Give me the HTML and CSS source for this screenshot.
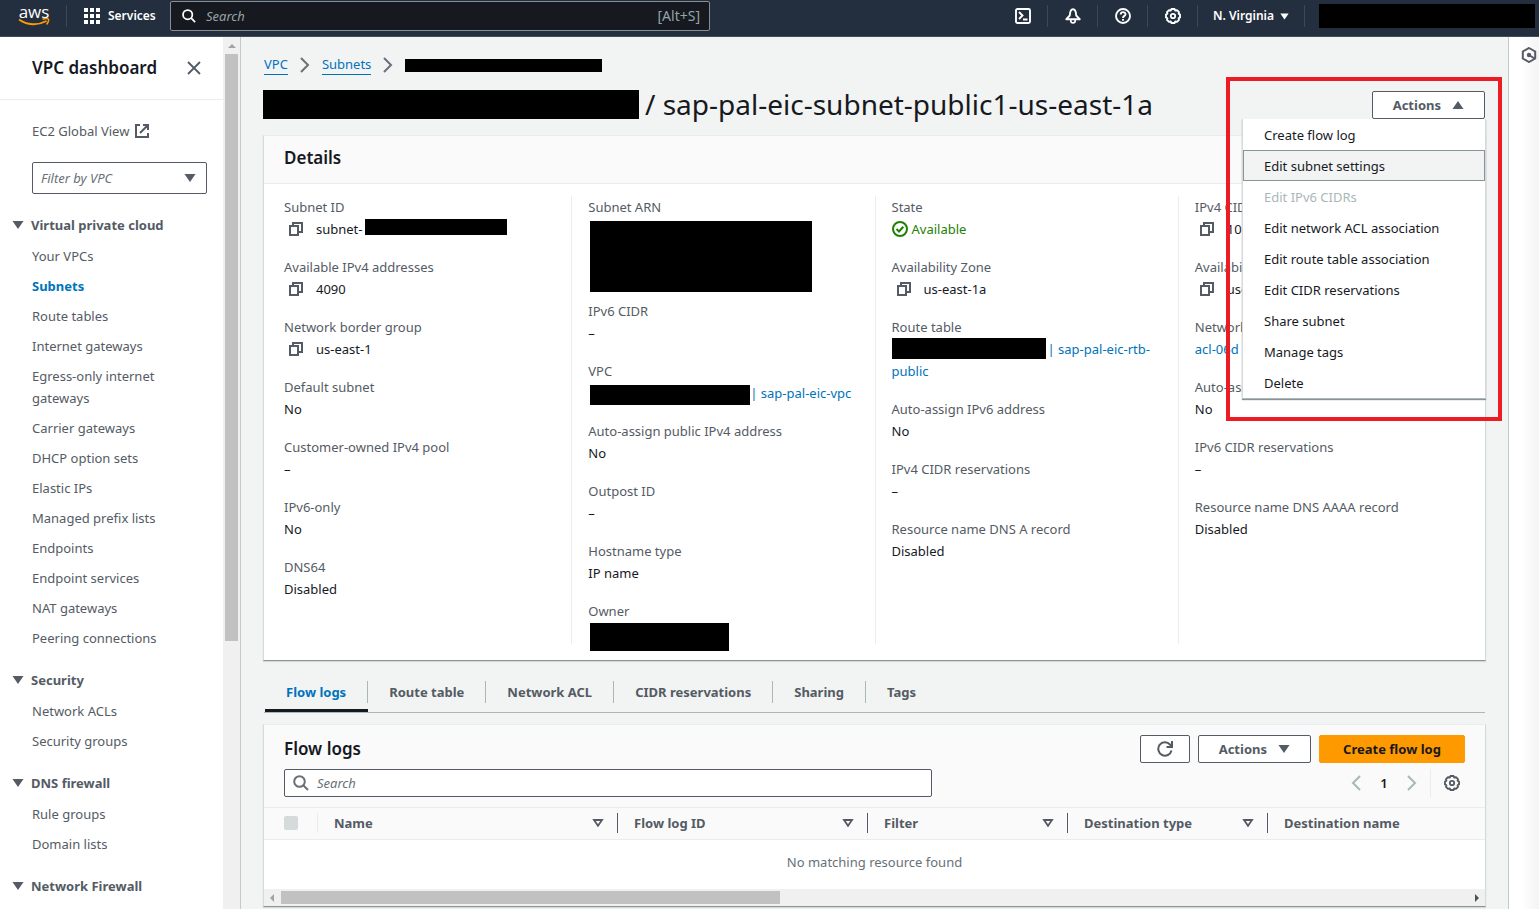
FILE: index.html
```html
<!DOCTYPE html>
<html lang="en">
<head>
<meta charset="utf-8">
<title>VPC dashboard</title>
<link rel="stylesheet" href="styles.css">
</head>
<body>
<svg class="defs" aria-hidden="true">
  <symbol id="copy" viewBox="0 0 16 16"><path d="M2 5h8v9H2z M5 5V2h9v9h-4" fill="none" stroke="currentColor" stroke-width="2"/></symbol>
  <symbol id="search" viewBox="0 0 16 16"><circle cx="6.5" cy="6.5" r="5.3" fill="none" stroke="currentColor" stroke-width="2"/><path d="M10.5 10.5 15 15" stroke="currentColor" stroke-width="2"/></symbol>
  <symbol id="down" viewBox="0 0 12 8"><path d="M.5 0h11L6 8z" fill="currentColor"/></symbol>
  <symbol id="up" viewBox="0 0 12 8"><path d="M.5 8h11L6 0z" fill="currentColor"/></symbol>
  <symbol id="sort" viewBox="0 0 12 8"><path d="M2 1h8L6 6.8z" fill="none" stroke="currentColor" stroke-width="1.8"/></symbol>
  <symbol id="right" viewBox="0 0 10 16"><path d="M1 1l7 7-7 7" fill="none" stroke="currentColor" stroke-width="2"/></symbol>
  <symbol id="left" viewBox="0 0 10 16"><path d="M9 1L2 8l7 7" fill="none" stroke="currentColor" stroke-width="2"/></symbol>
  <symbol id="gear" viewBox="0 0 16 16"><path d="M6.500 1h3l.8 1.500 1.700-.3 2 2-.4 1.600L15 6.600v2.800l-1.400.8.400 1.700-2 2-1.700-.4L9.500 15h-3l-.8-1.500-1.700.4-2-2 .4-1.700L1 9.400V6.600l1.400-.8L2 4.200l2-2 1.700.3z" fill="none" stroke="currentColor" stroke-width="1.900" stroke-linejoin="round"/><circle cx="8" cy="8" r="2.200" fill="none" stroke="currentColor" stroke-width="1.800"/></symbol>
</svg>

<header class="topbar">
  <a class="logo" href="#" aria-label="aws home">
    <span class="logo-text">aws</span>
    <svg class="logo-smile" viewBox="0 0 32 9"><path d="M1 1.500C9 7.200 19.500 7.800 28.500 3" fill="none" stroke="#f90" stroke-width="1.900"/><path d="M24.500 1.300c2.300-.9 5-.9 5.800-.3s0 3.600-1.800 5.600" fill="none" stroke="#f90" stroke-width="1.500"/></svg>
  </a>
  <button class="services" type="button">
    <svg class="i16" viewBox="0 0 16 16" fill="#fff"><path d="M0 0h4v4H0zM6 0h4v4H6zM12 0h4v4h-4zM0 6h4v4H0zM6 6h4v4H6zM12 6h4v4h-4zM0 12h4v4H0zM6 12h4v4H6zM12 12h4v4h-4z"/></svg>
    <span>Services</span>
  </button>
  <label class="global-search">
    <svg class="i14"><use href="#search"/></svg>
    <input type="search" placeholder="Search" aria-label="Search">
    <span class="hint">[Alt+S]</span>
  </label>
  <nav class="tools">
    <button class="tool" type="button" aria-label="CloudShell"><svg class="i16" viewBox="0 0 16 16" fill="none" stroke="#fff" stroke-width="1.900"><rect x="1" y="1" width="14" height="14" rx="1.500"/><path d="M4 4l3.500 3.500L4 11M8 11.500h4.500"/></svg></button>
    <button class="tool" type="button" aria-label="Notifications"><svg class="i16" viewBox="0 0 16 16" fill="none" stroke="#fff" stroke-width="1.900"><path d="M1.300 11.200L4.800 7.500C5 3.500 6.300 1.300 8 1.300S11 3.500 11.200 7.500l3.500 3.700z" stroke-linejoin="round"/><path d="M5.800 11.500v1c0 3.200 4.400 3.200 4.400 0v-1" stroke-width="1.700"/></svg></button>
    <button class="tool" type="button" aria-label="Help"><svg class="i16" viewBox="0 0 16 16" fill="none" stroke="#fff" stroke-width="1.900"><circle cx="8" cy="8" r="7"/><path d="M5.700 6.500C5.700 3.300 10.500 3.500 10.500 6.200 10.500 8 8 7.800 8 10M8 11v1.700"/></svg></button>
    <button class="tool" type="button" aria-label="Settings"><svg class="i16"><use href="#gear"/></svg></button>
    <button class="region" type="button">N. Virginia <svg class="arrow-s"><use href="#down"/></svg></button>
    <span class="redact account"></span>
  </nav>
</header>

<div class="layout">
  <aside class="sidebar">
    <div class="side-content">
      <div class="side-head">
        <h2>VPC dashboard</h2>
        <button class="plain" type="button" aria-label="Close navigation"><svg class="i14" viewBox="0 0 14 14"><path d="M1 1l12 12M13 1L1 13" stroke="currentColor" stroke-width="1.800"/></svg></button>
      </div>
      <nav class="side-nav">
        <a class="global" href="#">EC2 Global View <svg class="i14" viewBox="0 0 14 14" fill="none" stroke="currentColor" stroke-width="2"><path d="M5 1H1v12h12V9M8 1h5v5M13 1L5 9"/></svg></a>
        <div class="filter">
          <select aria-label="Filter by VPC"><option>Filter by VPC</option></select>
          <svg class="arrow"><use href="#down"/></svg>
        </div>
        <section>
          <h3><svg class="arrow"><use href="#down"/></svg>Virtual private cloud</h3>
          <ul>
            <li><a href="#">Your VPCs</a></li>
            <li><a class="current" href="#">Subnets</a></li>
            <li><a href="#">Route tables</a></li>
            <li><a href="#">Internet gateways</a></li>
            <li><a href="#">Egress-only internet gateways</a></li>
            <li><a href="#">Carrier gateways</a></li>
            <li><a href="#">DHCP option sets</a></li>
            <li><a href="#">Elastic IPs</a></li>
            <li><a href="#">Managed prefix lists</a></li>
            <li><a href="#">Endpoints</a></li>
            <li><a href="#">Endpoint services</a></li>
            <li><a href="#">NAT gateways</a></li>
            <li><a href="#">Peering connections</a></li>
          </ul>
        </section>
        <section>
          <h3><svg class="arrow"><use href="#down"/></svg>Security</h3>
          <ul>
            <li><a href="#">Network ACLs</a></li>
            <li><a href="#">Security groups</a></li>
          </ul>
        </section>
        <section>
          <h3><svg class="arrow"><use href="#down"/></svg>DNS firewall</h3>
          <ul>
            <li><a href="#">Rule groups</a></li>
            <li><a href="#">Domain lists</a></li>
          </ul>
        </section>
        <section>
          <h3><svg class="arrow"><use href="#down"/></svg>Network Firewall</h3>
        </section>
      </nav>
    </div>
    <div class="vscroll"><svg class="scroll-arrow" viewBox="0 0 8 4"><path d="M0 4h8L4 0z" fill="#a3a3a3"/></svg><div class="vthumb"></div></div>
  </aside>

  <main class="main">
    <nav class="crumbs" aria-label="Breadcrumb">
      <a href="#">VPC</a><svg class="chev"><use href="#right"/></svg>
      <a href="#">Subnets</a><svg class="chev"><use href="#right"/></svg>
      <span class="redact crumb-id"></span>
    </nav>
    <div class="title-row">
      <h1><span class="redact title-id"></span>/ sap-pal-eic-subnet-public1-us-east-1a</h1>
      <div class="actions">
        <button class="btn" type="button" aria-expanded="true">Actions <svg class="arrow"><use href="#up"/></svg></button>
        <div class="menu" role="menu">
          <button type="button" role="menuitem">Create flow log</button>
          <button class="active" type="button" role="menuitem">Edit subnet settings</button>
          <button type="button" role="menuitem" disabled>Edit IPv6 CIDRs</button>
          <button type="button" role="menuitem">Edit network ACL association</button>
          <button type="button" role="menuitem">Edit route table association</button>
          <button type="button" role="menuitem">Edit CIDR reservations</button>
          <button type="button" role="menuitem">Share subnet</button>
          <button type="button" role="menuitem">Manage tags</button>
          <button type="button" role="menuitem">Delete</button>
        </div>
        <div class="marker"></div>
      </div>
    </div>

    <section class="card">
      <div class="card-head"><h2>Details</h2></div>
      <div class="details">
        <dl>
          <div><dt>Subnet ID</dt><dd><svg class="copy"><use href="#copy"/></svg>subnet-<span class="redact subnet-id"></span></dd></div>
          <div><dt>Available IPv4 addresses</dt><dd><svg class="copy"><use href="#copy"/></svg>4090</dd></div>
          <div><dt>Network border group</dt><dd><svg class="copy"><use href="#copy"/></svg>us-east-1</dd></div>
          <div><dt>Default subnet</dt><dd>No</dd></div>
          <div><dt>Customer-owned IPv4 pool</dt><dd>–</dd></div>
          <div><dt>IPv6-only</dt><dd>No</dd></div>
          <div><dt>DNS64</dt><dd>Disabled</dd></div>
        </dl>
        <dl>
          <div><dt>Subnet ARN</dt><dd class="arn"><span class="redact"></span></dd></div>
          <div><dt>IPv6 CIDR</dt><dd>–</dd></div>
          <div><dt>VPC</dt><dd><span class="redact vpc-id"></span><a href="#">| sap-pal-eic-vpc</a></dd></div>
          <div><dt>Auto-assign public IPv4 address</dt><dd>No</dd></div>
          <div><dt>Outpost ID</dt><dd>–</dd></div>
          <div><dt>Hostname type</dt><dd>IP name</dd></div>
          <div><dt>Owner</dt><dd class="owner"><span class="redact"></span></dd></div>
        </dl>
        <dl>
          <div><dt>State</dt><dd class="ok"><svg class="i16" viewBox="0 0 16 16" fill="none" stroke="currentColor" stroke-width="2"><circle cx="8" cy="8" r="7"/><path d="M4.500 8l2.500 2.500 4.300-4.700"/></svg>Available</dd></div>
          <div><dt>Availability Zone</dt><dd><svg class="copy"><use href="#copy"/></svg>us-east-1a</dd></div>
          <div><dt>Route table</dt><dd class="wrap"><a href="#"><span class="redact rtb-id"></span>| sap-pal-eic-rtb-public</a></dd></div>
          <div><dt>Auto-assign IPv6 address</dt><dd>No</dd></div>
          <div><dt>IPv4 CIDR reservations</dt><dd>–</dd></div>
          <div><dt>Resource name DNS A record</dt><dd>Disabled</dd></div>
        </dl>
        <dl>
          <div><dt>IPv4 CIDR</dt><dd><svg class="copy"><use href="#copy"/></svg>10.</dd></div>
          <div><dt>Availabil</dt><dd><svg class="copy"><use href="#copy"/></svg>use</dd></div>
          <div><dt>Network</dt><dd><a href="#">acl-06d</a></dd></div>
          <div><dt>Auto-ass</dt><dd>No</dd></div>
          <div><dt>IPv6 CIDR reservations</dt><dd>–</dd></div>
          <div><dt>Resource name DNS AAAA record</dt><dd>Disabled</dd></div>
        </dl>
      </div>
    </section>

    <div class="tabs" role="tablist">
      <button class="tab selected" type="button" role="tab" aria-selected="true"><span>Flow logs</span></button>
      <button class="tab" type="button" role="tab"><span>Route table</span></button>
      <button class="tab" type="button" role="tab"><span>Network ACL</span></button>
      <button class="tab" type="button" role="tab"><span>CIDR reservations</span></button>
      <button class="tab" type="button" role="tab"><span>Sharing</span></button>
      <button class="tab" type="button" role="tab"><span>Tags</span></button>
    </div>

    <section class="card">
      <div class="logs-head">
        <div class="row">
          <h2>Flow logs</h2>
          <div class="buttons">
            <button class="btn refresh" type="button" aria-label="Refresh"><svg class="i16" viewBox="0 0 16 16" fill="none" stroke="currentColor" stroke-width="2"><path d="M14.500 9.500A6.700 6.700 0 1 1 13 3.500L15 5.500M15 0v6H9.500"/></svg></button>
            <button class="btn" type="button">Actions <svg class="arrow"><use href="#down"/></svg></button>
            <button class="btn primary" type="button">Create flow log</button>
          </div>
        </div>
        <div class="row">
          <label class="table-search"><svg class="i16"><use href="#search"/></svg><input type="search" placeholder="Search" aria-label="Search flow logs"></label>
          <div class="pager">
            <button class="plain muted" type="button" aria-label="Previous page"><svg class="chev"><use href="#left"/></svg></button>
            <span class="page">1</span>
            <button class="plain muted" type="button" aria-label="Next page"><svg class="chev"><use href="#right"/></svg></button>
            <button class="plain prefs" type="button" aria-label="Preferences"><svg class="i16"><use href="#gear"/></svg></button>
          </div>
        </div>
      </div>
      <table>
        <colgroup><col class="c-check"><col class="c-name"><col class="c-id"><col class="c-mid"><col class="c-mid"><col></colgroup>
        <thead>
          <tr>
            <th><div class="th check"><input type="checkbox" aria-label="Select all" disabled></div></th>
            <th><div class="th">Name<svg class="arrow"><use href="#sort"/></svg></div></th>
            <th><div class="th">Flow log ID<svg class="arrow"><use href="#sort"/></svg></div></th>
            <th><div class="th">Filter<svg class="arrow"><use href="#sort"/></svg></div></th>
            <th><div class="th">Destination type<svg class="arrow"><use href="#sort"/></svg></div></th>
            <th><div class="th last">Destination name</div></th>
          </tr>
        </thead>
        <tbody><tr><td colspan="6">No matching resource found</td></tr></tbody>
      </table>
      <div class="hscroll">
        <svg class="side-arrow" viewBox="0 0 4 8"><path d="M4 0v8L0 4z" fill="#a3a3a3"/></svg>
        <div class="htrack"><div class="hthumb"></div></div>
        <svg class="side-arrow" viewBox="0 0 4 8"><path d="M0 0v8l4-4z" fill="#505050"/></svg>
      </div>
    </section>
  </main>

  <aside class="rail">
    <button class="plain" type="button" aria-label="Open tools"><svg class="i16" viewBox="0 0 16 16" fill="none" stroke="currentColor" stroke-width="2"><path d="M8 1l6.200 3.500v7L8 15l-6.200-3.500v-7z"/><circle cx="8" cy="8" r="2.200" fill="currentColor" stroke="none"/><path d="M8 8l5.500 3.500"/></svg></button>
  </aside>
</div>
</body>
</html>
```
FILE: styles.css
```css
* { box-sizing: border-box; }
body {
  margin: 0;
  height: 100vh;
  display: flex;
  flex-direction: column;
  overflow: hidden;
  background: #f2f3f3;
  color: #16191f;
  font: 13px/22px "Noto Sans", "Open Sans", sans-serif;
}
h1, h2, h3, ul, dl, dd { margin: 0; padding: 0; }
ul { list-style: none; }
a { color: #0073bb; text-decoration: none; }
button, input, select { font: inherit; color: inherit; }
svg { flex: none; display: block; }
h2 { font-size: 17px; font-weight: 600; }
.defs { position: absolute; width: 0; height: 0; }
.i16 { width: 16px; height: 16px; }
.i14 { width: 14px; height: 14px; }
.arrow { width: 12px; height: 8px; }
.arrow-s { width: 9px; height: 7px; }
.chev { width: 10px; height: 16px; }
.redact { display: inline-block; background: #000; }
.plain { display: flex; padding: 0; border: 0; background: none; color: #545b64; }

/* Top bar */
.topbar {
  flex: none;
  height: 37px;
  display: flex;
  align-items: flex-start;
  padding-right: 4px;
  background: #232f3e;
  border-bottom: 1px solid #414d5c;
  color: #fff;
  font-size: 12px;
}
.logo { width: 67px; height: 22px; margin-top: 5px; padding-left: 18px; border-right: 1px solid #414750; color: #fff; }
.logo-text { display: block; width: 32px; text-align: center; font: 400 17px/13px "Open Sans", sans-serif; }
.logo-smile { width: 32px; height: 9px; }
.services { display: flex; align-items: center; gap: 8px; width: 103px; height: 32px; padding: 0 0 0 17px; border: 0; background: none; font-weight: 600; }
.global-search {
  flex: 0 1 540px;
  display: flex;
  align-items: center;
  height: 30px;
  margin-top: 1px;
  padding: 0 9px 0 11px;
  gap: 10px;
  background: #16191f;
  border: 1px solid #878f93;
  border-radius: 2px;
}
.global-search input, .table-search input { flex: 1; min-width: 0; padding: 0; border: 0; outline: 0; background: none; font-size: 13px; }
input::placeholder { font-style: italic; color: #687078; opacity: 1; }
.global-search input::placeholder { color: #95a5a6; }
.hint { color: #95a5a6; font-size: 14px; }
.tools { margin-left: auto; display: flex; align-items: center; margin-top: 4px; }
.tool, .region { display: flex; align-items: center; justify-content: center; height: 22px; padding: 0; background: none; border: 0; border-right: 1px solid #414750; }
.tool { width: 50px; }
.region { width: 107px; gap: 6px; font-size: 12px; font-weight: 600; }
.account { width: 216px; height: 24px; margin-left: 14px; }

/* Page frame */
.layout { flex: 1; min-height: 0; display: flex; }
.sidebar { flex: none; width: 241px; display: flex; background: #fff; border-right: 1px solid #c5cacb; }
.side-content { flex: 1; min-width: 0; overflow: hidden; color: #545b64; }
.side-head { display: flex; align-items: center; justify-content: space-between; height: 63px; padding: 0 22px 0 32px; border-bottom: 1px solid #eaeded; }
.side-head h2 { color: #16191f; }
.side-nav { padding: 20px 16px 20px 32px; }
.side-nav a { color: #545b64; }
.side-nav .current { color: #0073bb; font-weight: 700; }
.global { display: flex; align-items: center; gap: 6px; }
.filter { display: flex; align-items: center; margin: 20px 0; height: 32px; border: 1px solid #545b64; border-radius: 2px; }
.filter select { flex: 1; height: 30px; padding: 0 8px; border: 0; background: none; appearance: none; font-style: italic; color: #687078; }
.filter .arrow { margin-right: 10px; }
.side-nav section { margin-bottom: 20px; }
.side-nav h3 { display: flex; align-items: center; gap: 7px; margin: 0 0 9px -20px; font-size: 13px; font-weight: 700; }
.side-nav li + li { margin-top: 8px; }
.vscroll { flex: none; width: 17px; background: #f0f0f0; padding: 7px 2px 0; }
.scroll-arrow { width: 8px; height: 4px; margin: 0 auto 6px; }
.vthumb { height: 587px; background: #c1c1c1; }
.rail { flex: none; width: 31px; padding: 10px 0 0 12px; background: linear-gradient(90deg, #fff 40%, #f4f4f4); border-left: 1px solid #c5cacb; }
.main { flex: 1; min-width: 0; padding: 18px 23px 0; }

/* Title */
.crumbs { display: flex; align-items: center; gap: 12px; }
.crumbs a { line-height: 19px; border-bottom: 1px solid #0073bb; }
.crumbs .chev { color: #687078; }
.crumb-id { width: 197px; height: 13px; }
.title-row { display: flex; align-items: flex-start; justify-content: space-between; margin: 11px 0 12px; }
h1 { display: flex; align-items: center; gap: 6px; margin-left: -1px; font-size: 28px; line-height: 37px; font-weight: 400; white-space: nowrap; }
.title-id { width: 376px; height: 29px; }
.actions { position: relative; margin-top: 5px; }
.btn {
  display: flex;
  align-items: center;
  justify-content: center;
  gap: 11px;
  height: 28px;
  min-width: 113px;
  padding: 0 20px;
  background: #fff;
  border: 1px solid #545b64;
  border-radius: 2px;
  color: #545b64;
  font-weight: 700;
}
.btn.refresh { min-width: 50px; padding: 0; }
.btn.primary { min-width: 146px; background: #f90; border-color: #f90; color: #16191f; }
.menu {
  position: absolute;
  z-index: 2;
  top: 28px;
  right: -1px;
  width: 244px;
  background: #fff;
  border: 1px solid #d5dbdb;
  border-top: 0;
  border-bottom-color: #aab7b8;
  box-shadow: 0 1px 1px #879596;
}
.menu button { display: block; width: 100%; height: 31px; padding: 0 20px; border: 1px solid transparent; background: none; text-align: left; line-height: 22px; }
.menu .active { background: #f2f3f3; border-color: #879596; }
.menu button:disabled { color: #aab7b8; }
.marker { position: absolute; z-index: 3; top: -14px; right: -17px; width: 276px; height: 344px; border: 4px solid #ed1c24; pointer-events: none; }

/* Cards */
.card { margin: 0 -1px; background: #fff; border: 1px solid #d5dbdb; border-top-color: #eaeded; border-bottom-color: #879596; box-shadow: 0 1px 1px #d5dbdb; }
.card-head { height: 48px; padding: 11px 20px; background: #fafafa; border-bottom: 1px solid #eaeded; }
.details { display: grid; grid-template-columns: repeat(4, 1fr); padding: 12px 4px 16px; }
dl { display: flex; flex-direction: column; gap: 16px; padding: 0 16px; min-width: 0; }
dl + dl { border-left: 1px solid #eaeded; }
dt { color: #545b64; }
dt, dd { white-space: nowrap; }
dd { display: flex; align-items: center; height: 22px; }
dd.wrap { display: block; height: auto; white-space: normal; }
.copy { width: 16px; height: 16px; margin: 0 12px 0 4px; color: #545b64; }
.ok { gap: 4px; color: #1d8102; }
.subnet-id { width: 142px; height: 16px; margin: 0 0 4px 2px; }
dd.arn { height: 66px; padding: 3px 0 0 2px; align-items: flex-start; }
.arn .redact { flex: none; width: 222px; height: 71px; }
.vpc-id { width: 160px; height: 20px; margin: 4px 0 0 2px; }
dd.owner { padding: 1px 0 0 2px; align-items: flex-start; }
.owner .redact { flex: none; width: 139px; height: 28px; }
.rtb-id { width: 154px; height: 21px; margin-right: 2px; vertical-align: top; }

/* Tabs */
.tabs { display: flex; height: 41px; margin: 11px 0; padding-left: 1px; border-bottom: 1px solid #aab7b8; }
.tab { padding: 3px 0 0; border: 0; border-bottom: 3px solid transparent; background: none; color: #545b64; font-weight: 700; }
.tab span { display: block; padding: 0 21px; border-right: 1px solid #aab7b8; }
.tab:last-child span { border-right: 0; }
.selected { color: #0073bb; border-bottom-color: #16191f; }

/* Flow logs */
.logs-head { display: flex; flex-direction: column; gap: 6px; padding: 10px 20px; background: #fafafa; border-bottom: 1px solid #eaeded; }
.row { display: flex; align-items: center; justify-content: space-between; }
.buttons { display: flex; gap: 8px; }
.table-search { flex: 0 1 648px; display: flex; align-items: center; gap: 8px; height: 28px; padding: 0 8px; background: #fff; border: 1px solid #545b64; border-radius: 2px; }
.table-search svg { color: #687078; }
.pager { display: flex; align-items: center; }
.muted { color: #aab7b8; }
.page { width: 46px; text-align: center; font-weight: 600; }
.prefs { height: 28px; align-items: center; margin-left: 13px; padding: 0 5px 0 13px; border-left: 1px solid #eaeded; }
table { width: 100%; table-layout: fixed; border-collapse: collapse; }
.c-check { width: 54px; }
.c-name { width: 300px; }
.c-id { width: 250px; }
.c-mid { width: 200px; }
th { height: 31px; padding: 0; background: #fafafa; border-bottom: 1px solid #eaeded; text-align: left; font-weight: 700; color: #545b64; }
.th { display: flex; align-items: center; justify-content: space-between; height: 20px; padding: 0 13px 0 16px; border-right: 1px solid #545b64; }
.th.check { padding-left: 20px; border-color: #eaeded; }
.th.last { border: 0; }
.check input { appearance: none; width: 14px; height: 14px; margin: 0; background: #d5dbdb; border-radius: 2px; }
td { height: 50px; padding: 0; padding-bottom: 5px; text-align: center; color: #687078; }
.hscroll { display: flex; align-items: center; gap: 7px; height: 17px; padding: 0 6px 0 6px; background: #f0f0f0; }
.side-arrow { width: 4px; height: 8px; }
.htrack { flex: 1; }
.hthumb { width: 42%; height: 13px; background: #c1c1c1; }
```
